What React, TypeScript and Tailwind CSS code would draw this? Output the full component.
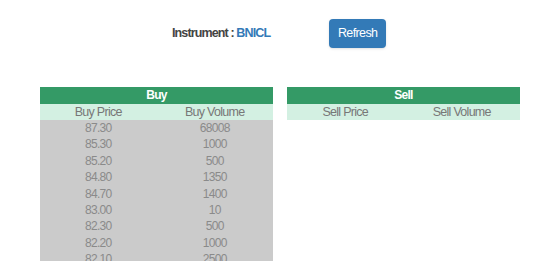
const buys = [
  ["87.30", "68008"],
  ["85.30", "1000"],
  ["85.20", "500"],
  ["84.80", "1350"],
  ["84.70", "1400"],
  ["83.00", "10"],
  ["82.30", "500"],
  ["82.20", "1000"],
  ["82.10", "2500"],
];

const font = { fontFamily: '"Liberation Sans", Arial, sans-serif' };

function BookTable({ title, cols, rows }: { title: string; cols: [string, string]; rows: string[][] }) {
  return (
    <div className="w-[233px] shrink-0 text-[12px] tracking-[-0.06em]">
      <div className="h-[17px] bg-[#349a66] text-center font-bold leading-[17px] text-white">{title}</div>
      <div className="grid h-[16px] grid-cols-2 bg-[#d3f0e2] text-center text-[12.5px] leading-[16px] text-[#777]">
        <div>{cols[0]}</div>
        <div>{cols[1]}</div>
      </div>
      {rows.length > 0 && (
        <div className="bg-[#cbcbcb] text-[#8a8a8a]">
          {rows.map(([p, v], i) => (
            <div key={i} className="grid h-[16.4px] grid-cols-2 text-center leading-[16.4px]">
              <div>{p}</div>
              <div>{v}</div>
            </div>
          ))}
        </div>
      )}
    </div>
  );
}

export default function App() {
  return (
    <div className="h-[261px] overflow-hidden bg-white" style={font}>
      <div className="flex items-center gap-[59px] pl-[172px] pt-[19px]">
        <div className="text-[12.5px] font-bold tracking-[-0.07em] text-[#444]">
          Instrument : <span className="text-[#337ab7]">BNICL</span>
        </div>
        <button className="h-[29px] w-[57px] rounded-[4px] bg-[#337ab7] text-[12.5px] tracking-[-0.05em] text-white shadow-sm">
          Refresh
        </button>
      </div>
      <div className="mt-[39px] flex gap-[14px] pl-[40px]">
        <BookTable title="Buy" cols={["Buy Price", "Buy Volume"]} rows={buys} />
        <div className="w-[232px] shrink-0">
          <BookTable title="Sell" cols={["Sell Price", "Sell Volume"]} rows={[]} />
        </div>
      </div>
    </div>
  );
}
